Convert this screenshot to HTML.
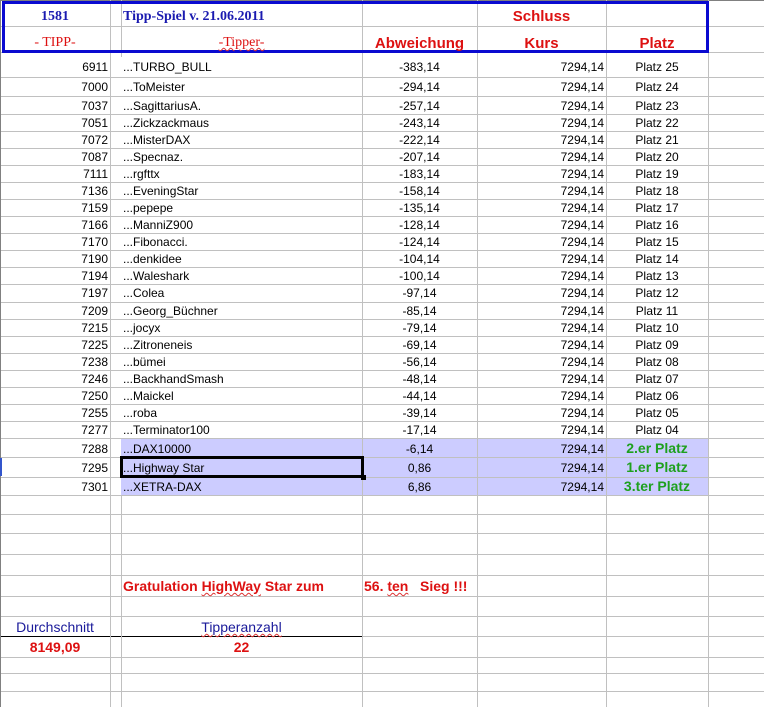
<!DOCTYPE html>
<html><head><meta charset="utf-8"><style>
*{margin:0;padding:0;box-sizing:border-box}
body{width:764px;height:707px;background:#fff;position:relative;overflow:hidden;font-family:"Liberation Sans",Arial,sans-serif;font-size:12px;color:#000}
.h{position:absolute;left:0;width:764px;height:1px;background:#c0c0c0}
.v{position:absolute;width:1px;background:#c0c0c0}
.t{position:absolute;white-space:nowrap;line-height:1}
.r{text-align:right}
.c{text-align:center}
.hl{position:absolute;left:121px;width:587px;background:#ccccff}
.red{color:#dd1111;font-weight:bold;font-size:15px}
.ser{font-family:"Liberation Serif",serif;font-weight:bold;font-size:14px}
.g{color:#1ea01e;font-weight:bold;font-size:14px}
.wav{text-decoration:underline wavy #d33;text-underline-offset:1px;text-decoration-thickness:1px}
</style></head><body>
<div class="hl" style="top:438px;height:57px"></div>
<div class="h" style="top:0;background:#808080"></div>
<div class="h" style="top:26px"></div>
<div class="h" style="top:52px"></div>
<div class="h" style="top:77px"></div>
<div class="h" style="top:96px"></div>
<div class="h" style="top:114px"></div>
<div class="h" style="top:131px"></div>
<div class="h" style="top:148px"></div>
<div class="h" style="top:165px"></div>
<div class="h" style="top:182px"></div>
<div class="h" style="top:199px"></div>
<div class="h" style="top:216px"></div>
<div class="h" style="top:233px"></div>
<div class="h" style="top:250px"></div>
<div class="h" style="top:267px"></div>
<div class="h" style="top:284px"></div>
<div class="h" style="top:302px"></div>
<div class="h" style="top:319px"></div>
<div class="h" style="top:336px"></div>
<div class="h" style="top:353px"></div>
<div class="h" style="top:370px"></div>
<div class="h" style="top:387px"></div>
<div class="h" style="top:404px"></div>
<div class="h" style="top:421px"></div>
<div class="h" style="top:438px"></div>
<div class="h" style="top:457px"></div>
<div class="h" style="top:477px"></div>
<div class="h" style="top:495px"></div>
<div class="h" style="top:514px"></div>
<div class="h" style="top:533px"></div>
<div class="h" style="top:554px"></div>
<div class="h" style="top:575px"></div>
<div class="h" style="top:596px"></div>
<div class="h" style="top:616px"></div>
<div class="h" style="top:636px"></div>
<div class="h" style="top:657px"></div>
<div class="h" style="top:673px"></div>
<div class="h" style="top:691px"></div>
<div style="position:absolute;left:0;top:636px;width:362px;height:1px;background:#000"></div>
<div class="v" style="left:0;top:0;height:707px;background:#808080"></div>
<div class="v" style="left:110px;top:0;height:707px"></div>
<div class="v" style="left:121px;top:0;height:57px"></div>
<div class="v" style="left:121px;top:495px;height:212px"></div>
<div class="v" style="left:362px;top:0;height:707px"></div>
<div class="v" style="left:477px;top:0;height:707px"></div>
<div class="v" style="left:606px;top:0;height:707px"></div>
<div class="v" style="left:708px;top:0;height:707px"></div>
<div style="position:absolute;left:0;top:458px;width:2px;height:18px;background:#3355cc"></div>
<div style="position:absolute;left:2px;top:1px;width:707px;height:52px;border:3px solid #0a0ad0"></div>
<div class="t ser c" style="left:0;width:110px;top:10px;color:#1a1ab0">1581</div>
<div class="t ser" style="left:123px;top:10px;color:#1a1ab0">Tipp-Spiel v. 21.06.2011</div>
<div class="t red c" style="left:477px;width:129px;top:9px">Schluss</div>
<div class="t ser c" style="left:0;width:110px;top:36px;color:#dd1111;font-weight:normal">- TIPP-</div>
<div class="t ser c" style="left:121px;width:241px;top:36px;color:#dd1111;font-weight:normal"><span class="wav">-Tipper-</span></div>
<div class="t red c" style="left:362px;width:115px;top:36px">Abweichung</div>
<div class="t red c" style="left:477px;width:129px;top:36px">Kurs</div>
<div class="t red c" style="left:606px;width:102px;top:36px">Platz</div>
<div class="t r" style="left:0;width:108px;top:61px">6911</div><div class="t" style="left:123px;top:61px">...TURBO_BULL</div><div class="t c" style="left:362px;width:115px;top:61px">-383,14</div><div class="t r" style="left:477px;width:127px;top:61px">7294,14</div><div class="t c" style="left:606px;width:102px;top:61px">Platz 25</div>
<div class="t r" style="left:0;width:108px;top:81px">7000</div><div class="t" style="left:123px;top:81px">...ToMeister</div><div class="t c" style="left:362px;width:115px;top:81px">-294,14</div><div class="t r" style="left:477px;width:127px;top:81px">7294,14</div><div class="t c" style="left:606px;width:102px;top:81px">Platz 24</div>
<div class="t r" style="left:0;width:108px;top:100px">7037</div><div class="t" style="left:123px;top:100px">...SagittariusA.</div><div class="t c" style="left:362px;width:115px;top:100px">-257,14</div><div class="t r" style="left:477px;width:127px;top:100px">7294,14</div><div class="t c" style="left:606px;width:102px;top:100px">Platz 23</div>
<div class="t r" style="left:0;width:108px;top:117px">7051</div><div class="t" style="left:123px;top:117px">...Zickzackmaus</div><div class="t c" style="left:362px;width:115px;top:117px">-243,14</div><div class="t r" style="left:477px;width:127px;top:117px">7294,14</div><div class="t c" style="left:606px;width:102px;top:117px">Platz 22</div>
<div class="t r" style="left:0;width:108px;top:134px">7072</div><div class="t" style="left:123px;top:134px">...MisterDAX</div><div class="t c" style="left:362px;width:115px;top:134px">-222,14</div><div class="t r" style="left:477px;width:127px;top:134px">7294,14</div><div class="t c" style="left:606px;width:102px;top:134px">Platz 21</div>
<div class="t r" style="left:0;width:108px;top:151px">7087</div><div class="t" style="left:123px;top:151px">...Specnaz.</div><div class="t c" style="left:362px;width:115px;top:151px">-207,14</div><div class="t r" style="left:477px;width:127px;top:151px">7294,14</div><div class="t c" style="left:606px;width:102px;top:151px">Platz 20</div>
<div class="t r" style="left:0;width:108px;top:168px">7111</div><div class="t" style="left:123px;top:168px">...rgfttx</div><div class="t c" style="left:362px;width:115px;top:168px">-183,14</div><div class="t r" style="left:477px;width:127px;top:168px">7294,14</div><div class="t c" style="left:606px;width:102px;top:168px">Platz 19</div>
<div class="t r" style="left:0;width:108px;top:185px">7136</div><div class="t" style="left:123px;top:185px">...EveningStar</div><div class="t c" style="left:362px;width:115px;top:185px">-158,14</div><div class="t r" style="left:477px;width:127px;top:185px">7294,14</div><div class="t c" style="left:606px;width:102px;top:185px">Platz 18</div>
<div class="t r" style="left:0;width:108px;top:202px">7159</div><div class="t" style="left:123px;top:202px">...pepepe</div><div class="t c" style="left:362px;width:115px;top:202px">-135,14</div><div class="t r" style="left:477px;width:127px;top:202px">7294,14</div><div class="t c" style="left:606px;width:102px;top:202px">Platz 17</div>
<div class="t r" style="left:0;width:108px;top:219px">7166</div><div class="t" style="left:123px;top:219px">...ManniZ900</div><div class="t c" style="left:362px;width:115px;top:219px">-128,14</div><div class="t r" style="left:477px;width:127px;top:219px">7294,14</div><div class="t c" style="left:606px;width:102px;top:219px">Platz 16</div>
<div class="t r" style="left:0;width:108px;top:236px">7170</div><div class="t" style="left:123px;top:236px">...Fibonacci.</div><div class="t c" style="left:362px;width:115px;top:236px">-124,14</div><div class="t r" style="left:477px;width:127px;top:236px">7294,14</div><div class="t c" style="left:606px;width:102px;top:236px">Platz 15</div>
<div class="t r" style="left:0;width:108px;top:253px">7190</div><div class="t" style="left:123px;top:253px">...denkidee</div><div class="t c" style="left:362px;width:115px;top:253px">-104,14</div><div class="t r" style="left:477px;width:127px;top:253px">7294,14</div><div class="t c" style="left:606px;width:102px;top:253px">Platz 14</div>
<div class="t r" style="left:0;width:108px;top:270px">7194</div><div class="t" style="left:123px;top:270px">...Waleshark</div><div class="t c" style="left:362px;width:115px;top:270px">-100,14</div><div class="t r" style="left:477px;width:127px;top:270px">7294,14</div><div class="t c" style="left:606px;width:102px;top:270px">Platz 13</div>
<div class="t r" style="left:0;width:108px;top:287px">7197</div><div class="t" style="left:123px;top:287px">...Colea</div><div class="t c" style="left:362px;width:115px;top:287px">-97,14</div><div class="t r" style="left:477px;width:127px;top:287px">7294,14</div><div class="t c" style="left:606px;width:102px;top:287px">Platz 12</div>
<div class="t r" style="left:0;width:108px;top:305px">7209</div><div class="t" style="left:123px;top:305px">...Georg_Büchner</div><div class="t c" style="left:362px;width:115px;top:305px">-85,14</div><div class="t r" style="left:477px;width:127px;top:305px">7294,14</div><div class="t c" style="left:606px;width:102px;top:305px">Platz 11</div>
<div class="t r" style="left:0;width:108px;top:322px">7215</div><div class="t" style="left:123px;top:322px">...jocyx</div><div class="t c" style="left:362px;width:115px;top:322px">-79,14</div><div class="t r" style="left:477px;width:127px;top:322px">7294,14</div><div class="t c" style="left:606px;width:102px;top:322px">Platz 10</div>
<div class="t r" style="left:0;width:108px;top:339px">7225</div><div class="t" style="left:123px;top:339px">...Zitroneneis</div><div class="t c" style="left:362px;width:115px;top:339px">-69,14</div><div class="t r" style="left:477px;width:127px;top:339px">7294,14</div><div class="t c" style="left:606px;width:102px;top:339px">Platz 09</div>
<div class="t r" style="left:0;width:108px;top:356px">7238</div><div class="t" style="left:123px;top:356px">...bümei</div><div class="t c" style="left:362px;width:115px;top:356px">-56,14</div><div class="t r" style="left:477px;width:127px;top:356px">7294,14</div><div class="t c" style="left:606px;width:102px;top:356px">Platz 08</div>
<div class="t r" style="left:0;width:108px;top:373px">7246</div><div class="t" style="left:123px;top:373px">...BackhandSmash</div><div class="t c" style="left:362px;width:115px;top:373px">-48,14</div><div class="t r" style="left:477px;width:127px;top:373px">7294,14</div><div class="t c" style="left:606px;width:102px;top:373px">Platz 07</div>
<div class="t r" style="left:0;width:108px;top:390px">7250</div><div class="t" style="left:123px;top:390px">...Maickel</div><div class="t c" style="left:362px;width:115px;top:390px">-44,14</div><div class="t r" style="left:477px;width:127px;top:390px">7294,14</div><div class="t c" style="left:606px;width:102px;top:390px">Platz 06</div>
<div class="t r" style="left:0;width:108px;top:407px">7255</div><div class="t" style="left:123px;top:407px">...roba</div><div class="t c" style="left:362px;width:115px;top:407px">-39,14</div><div class="t r" style="left:477px;width:127px;top:407px">7294,14</div><div class="t c" style="left:606px;width:102px;top:407px">Platz 05</div>
<div class="t r" style="left:0;width:108px;top:424px">7277</div><div class="t" style="left:123px;top:424px">...Terminator100</div><div class="t c" style="left:362px;width:115px;top:424px">-17,14</div><div class="t r" style="left:477px;width:127px;top:424px">7294,14</div><div class="t c" style="left:606px;width:102px;top:424px">Platz 04</div>
<div class="t r" style="left:0;width:108px;top:443px">7288</div><div class="t" style="left:123px;top:443px">...DAX10000</div><div class="t c" style="left:362px;width:115px;top:443px">-6,14</div><div class="t r" style="left:477px;width:127px;top:443px">7294,14</div><div class="t c g" style="left:606px;width:102px;top:441px">2.er Platz</div>
<div class="t r" style="left:0;width:108px;top:462px">7295</div><div class="t" style="left:123px;top:462px">...Highway Star</div><div class="t c" style="left:362px;width:115px;top:462px">0,86</div><div class="t r" style="left:477px;width:127px;top:462px">7294,14</div><div class="t c g" style="left:606px;width:102px;top:460px">1.er Platz</div>
<div class="t r" style="left:0;width:108px;top:481px">7301</div><div class="t" style="left:123px;top:481px">...XETRA-DAX</div><div class="t c" style="left:362px;width:115px;top:481px">6,86</div><div class="t r" style="left:477px;width:127px;top:481px">7294,14</div><div class="t c g" style="left:606px;width:102px;top:479px">3.ter Platz</div>
<div style="position:absolute;left:120px;top:456px;width:244px;height:22px;border:3px solid #000"></div>
<div style="position:absolute;left:361px;top:475px;width:5px;height:5px;background:#000"></div>
<div class="t" style="left:123px;top:579px;color:#dd1111;font-weight:bold;font-size:14px">Gratulation <span class="wav">HighWay</span> Star zum</div>
<div class="t" style="left:364px;top:579px;color:#dd1111;font-weight:bold;font-size:14px">56. <span class="wav">ten</span>&nbsp;&nbsp; Sieg !!!</div>
<div class="t c" style="left:0;width:110px;top:620px;color:#1a1a9a;font-size:14px">Durchschnitt</div>
<div class="t c" style="left:121px;width:241px;top:620px;color:#1a1a9a;font-size:14px"><span class="wav">Tipperanzahl</span></div>
<div class="t c" style="left:0;width:110px;top:640px;color:#dd1111;font-weight:bold;font-size:14px">8149,09</div>
<div class="t c" style="left:121px;width:241px;top:640px;color:#dd1111;font-weight:bold;font-size:14px">22</div>
</body></html>
